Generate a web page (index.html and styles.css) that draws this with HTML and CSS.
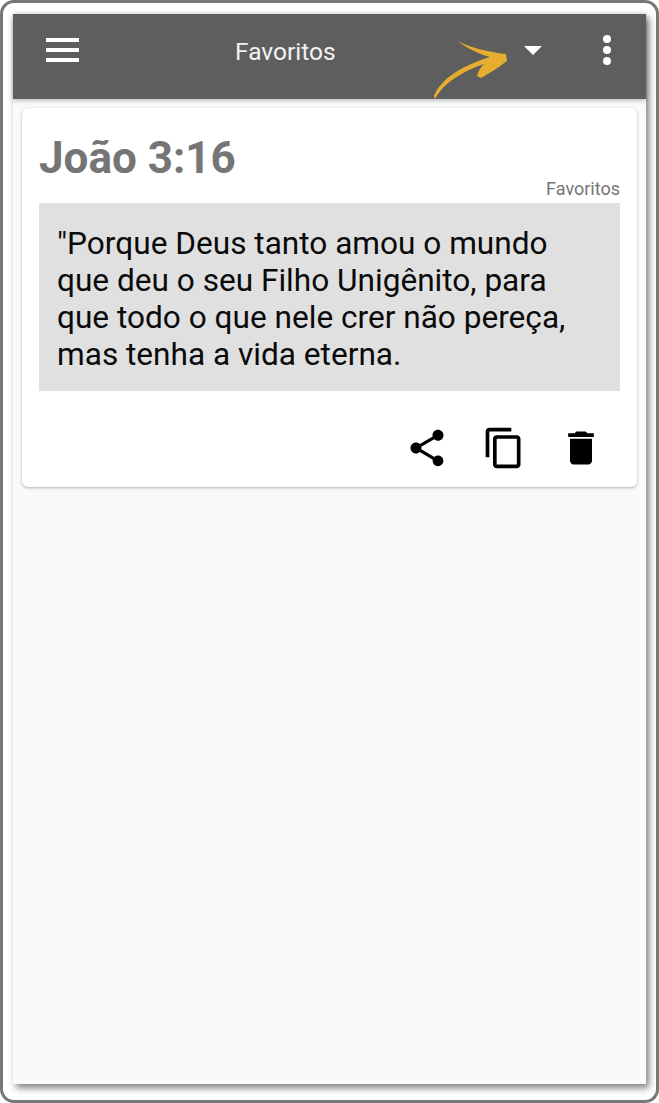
FILE: index.html
```html
<!DOCTYPE html>
<html lang="pt">
<head>
  <meta charset="UTF-8">
  <title>Favoritos</title>
  <link rel="stylesheet" href="styles.css">
</head>
<body>
  <div class="frame">
    <div class="screen">
      <div class="toolbar">
        <div class="menu-btn"><span></span><span></span><span></span></div>
        <div class="toolbar-title">Favoritos</div>
        <div class="caret"></div>
        <div class="more-btn"><span></span><span></span><span></span></div>
        <svg class="arrow" width="90" height="62" viewBox="0 0 90 62">
          <path fill="#e5ae2e" d="M23 3 C38 10 54 14 72 16 L73 23 C65 29 56 35 47 40 L43 38 C44 34 46 30 50 26 C30 33 10 44 1 61 L0 58 C7 40 30 27 56 19 C42 15 32 9 23 3 Z"/>
        </svg>
      </div>
      <div class="content">
        <div class="card">
          <h1 class="verse-ref">João 3:16</h1>
          <div class="verse-tag">Favoritos</div>
          <div class="verse-box">"Porque Deus tanto amou o mundo que deu o seu Filho Unigênito, para que todo o que nele crer não pereça, mas tenha a vida eterna.</div>
          <div class="card-actions">
            <svg class="icon" width="44" height="44" viewBox="0 0 24 24"><path d="M18 16.08c-.76 0-1.44.3-1.96.77L8.91 12.7c.05-.23.09-.46.09-.7s-.04-.47-.09-.7l7.05-4.11c.54.5 1.25.81 2.04.81 1.66 0 3-1.34 3-3s-1.34-3-3-3-3 1.34-3 3c0 .24.04.47.09.7L8.04 9.81C7.5 9.31 6.79 9 6 9c-1.66 0-3 1.34-3 3s1.34 3 3 3c.79 0 1.5-.31 2.04-.81l7.12 4.16c-.05.21-.08.43-.08.65 0 1.61 1.31 2.92 2.92 2.92s2.92-1.31 2.92-2.92-1.31-2.92-2.92-2.92z"/></svg>
            <svg class="icon" width="44" height="44" viewBox="0 0 24 24"><path d="M16 1H4c-1.1 0-2 .9-2 2v14h2V3h12V1zm3 4H8c-1.1 0-2 .9-2 2v14c0 1.1.9 2 2 2h11c1.1 0 2-.9 2-2V7c0-1.1-.9-2-2-2zm0 16H8V7h11v14z"/></svg>
            <svg class="icon" width="44" height="44" viewBox="0 0 24 24"><path d="M6 19c0 1.1.9 2 2 2h8c1.1 0 2-.9 2-2V7H6v12zM19 4h-3.5l-1-1h-5l-1 1H5v2h14V4z"/></svg>
          </div>
        </div>
      </div>
    </div>
  </div>
</body>
</html>
```

FILE: styles.css
```css
*{
  margin: 0;
  padding: 0;
  box-sizing: border-box;
}
body{
  background: #fff;
  font-family: Roboto, "Liberation Sans", sans-serif;
}
.frame{
  width: 659px;
  height: 1103px;
  border: 3px solid #777;
  border-radius: 14px;
  background: #fff;
  padding: 11px 10px 14px 10px;
}
.screen{
  width: 633px;
  height: 1070px;
  background: #fafafa;
  box-shadow: 3px 4px 7px rgba(0,0,0,.5);
  display: flex;
  flex-direction: column;
}
.toolbar{
  height: 85px;
  flex: none;
  background: #5e5e5e;
  box-shadow: 0 1px 5px rgba(0,0,0,.3);
  position: relative;
  display: flex;
  align-items: center;
  padding: 0 32px 13px 33px;
}
.menu-btn{
  width: 33px;
  display: flex;
  flex-direction: column;
  gap: 6px;
}
.menu-btn span{
  height: 4px;
  background: #fff;
}
.toolbar-title{
  margin-left: 156px;
  margin-top: 2px;
  width: 279px;
  color: #f2f2f2;
  font-size: 24.5px;
}
.caret{
  width: 0;
  height: 0;
  border-left: 9px solid transparent;
  border-right: 9px solid transparent;
  border-top: 9px solid #fff;
  margin-left: 10px;
}
.more-btn{
  margin-left: 61px;
  display: flex;
  flex-direction: column;
  gap: 3px;
}
.more-btn span{
  width: 8px;
  height: 8px;
  border-radius: 50%;
  background: #fff;
}
.arrow{
  position: absolute;
  left: 421px;
  top: 24px;
}
.content{
  padding: 9px 9px;
}
.card{
  height: 379px;
  background: #fff;
  border-radius: 6px;
  box-shadow: 0 1px 3px rgba(0,0,0,.3);
  padding: 25px 17px 0 17px;
}
.verse-ref{
  font-size: 44px;
  line-height: 50px;
  font-weight: 700;
  color: #757575;
}
.verse-tag{
  text-align: right;
  font-size: 18px;
  line-height: 20px;
  color: #757575;
  margin-top: -4px;
  margin-bottom: 4px;
}
.verse-box{
  height: 188px;
  background: #e0e0e0;
  padding: 22px 20px 0 18px;
  font-size: 31.6px;
  line-height: 37px;
  color: #0a0a0a;
}
.card-actions{
  display: flex;
  justify-content: flex-end;
  align-items: center;
  gap: 33px;
  padding: 35px 17px 0 0;
}
.icon{
  display: block;
  fill: #000;
}
```
